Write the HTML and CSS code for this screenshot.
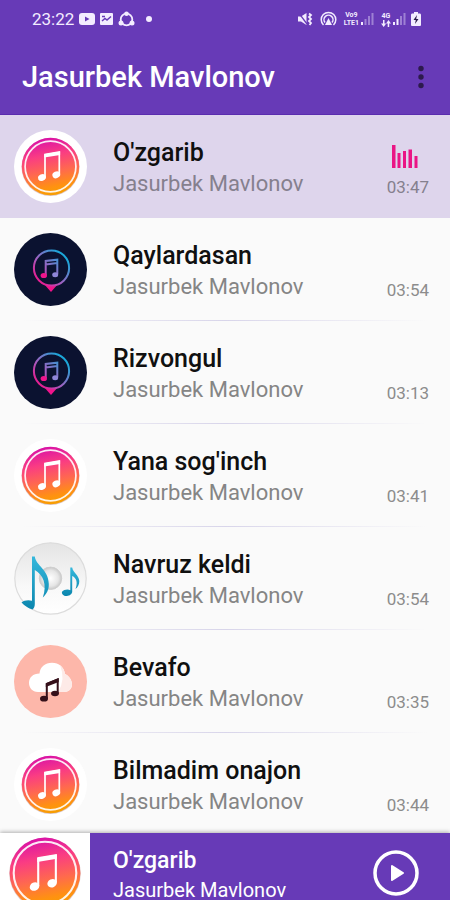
FILE: index.html
```html
<!DOCTYPE html>
<html lang="uz">
<head>
<meta charset="utf-8">
<meta name="viewport" content="width=device-width, initial-scale=1">
<title>Jasurbek Mavlonov</title>
<link rel="stylesheet" href="styles.css">
</head>
<body>
<svg class="defs" aria-hidden="true">
  <defs>
    <linearGradient id="sunset" x1="0.4" y1="0" x2="0.6" y2="1">
      <stop offset="0" stop-color="#d911a8"/>
      <stop offset="0.3" stop-color="#fa3c83"/>
      <stop offset="0.6" stop-color="#ff6a4d"/>
      <stop offset="0.85" stop-color="#ff9210"/>
      <stop offset="1" stop-color="#f5a000"/>
    </linearGradient>
    <linearGradient id="neon" gradientUnits="userSpaceOnUse" x1="24" y1="50" x2="50" y2="24">
      <stop offset="0" stop-color="#f0148c"/>
      <stop offset="0.45" stop-color="#a060c0"/>
      <stop offset="1" stop-color="#1ba6d8"/>
    </linearGradient>
    <linearGradient id="disc" x1="0" y1="0" x2="0" y2="1">
      <stop offset="0" stop-color="#e4e4e4"/>
      <stop offset="0.6" stop-color="#f8f8f8"/>
      <stop offset="1" stop-color="#ffffff"/>
    </linearGradient>
    <radialGradient id="hub">
      <stop offset="0" stop-color="#ffffff"/>
      <stop offset="0.7" stop-color="#e6e6e6"/>
      <stop offset="1" stop-color="#c8c8c8"/>
    </radialGradient>
    <linearGradient id="aqua" x1="0" y1="0" x2="0" y2="1">
      <stop offset="0" stop-color="#35b8dc"/>
      <stop offset="1" stop-color="#0b86ae"/>
    </linearGradient>
  </defs>
  <symbol id="art-sunset" viewBox="0 0 73 73">
    <circle cx="36.500" cy="36.500" r="36.500" fill="#fff"/>
    <circle cx="36.500" cy="37" r="29" fill="#b98a8a" opacity=".5"/>
    <circle cx="36.500" cy="36.500" r="28.700" fill="url(#sunset)"/>
    <circle cx="36.500" cy="36.500" r="25.400" fill="none" stroke="#fff" stroke-width="1.700" opacity=".9"/>
    <path d="M31 47V25L45.300 22.500V44" fill="none" stroke="#fff" stroke-width="1.700"/>
    <path d="M30.200 23.800L46.100 21V25L30.200 27.600Z" fill="#fff"/>
    <ellipse cx="28" cy="47.500" rx="4" ry="3.300" transform="rotate(-25 28 47.500)" fill="#fff"/>
    <ellipse cx="42.300" cy="44.800" rx="4" ry="3.300" transform="rotate(-25 42.300 44.800)" fill="#fff"/>
  </symbol>
  <symbol id="art-pin" viewBox="0 0 73 73">
    <circle cx="36.500" cy="36.500" r="36.500" fill="#0b1230"/>
    <path d="M30 51L37 59L44 51Q37 54 30 51Z" fill="#f0148c"/>
    <circle cx="37.500" cy="35" r="17.600" fill="none" stroke="url(#neon)" stroke-width="2"/>
    <path d="M31.700 42V28L43.300 26.700V41M31.700 31.500L43.300 30" fill="none" stroke="url(#neon)" stroke-width="2"/>
    <ellipse cx="29.800" cy="42.500" rx="3.200" ry="2.600" fill="#f0148c"/>
    <ellipse cx="41.200" cy="41.700" rx="3" ry="2.500" fill="#8f86d8"/>
  </symbol>
  <symbol id="art-disc" viewBox="0 0 73 73">
    <circle cx="36.500" cy="36.500" r="35.700" fill="url(#disc)" stroke="#dcdcdc" stroke-width="1.200"/>
    <circle cx="36.500" cy="36.300" r="11.200" fill="url(#hub)" stroke="#cfcfcf"/>
    <path d="M18 14.500H20.800C22 24 34.500 27 34.800 42C35 48 32.500 52 28.800 55.500C33.500 42 29 33 20.800 28V62C20.800 64.500 20 66.500 18.500 67.500C15 66.500 10 63.500 7.500 60.500C10 58.500 14 57.500 18 58.800Z" fill="url(#aqua)"/>
    <path d="M56.300 25.500H58.200C59 31 65 33 65.300 39C65.300 42.500 64 45 61.500 47C64 40.500 62.500 36 58.200 34V50C57.500 53 54.500 54 52 54C49 53.800 47.500 51.500 48 49.700C50 47.500 54 47 56.300 48.200Z" fill="url(#aqua)"/>
  </symbol>
  <symbol id="art-cloud" viewBox="0 0 73 73">
    <circle cx="36.500" cy="36.500" r="36.500" fill="#fdb7aa"/>
    <path d="M24 47C18 47 15 42.500 15 38C15 32.500 19 28.500 25.500 28.500C26 22 31 17.700 38 17.700C45 17.700 50 22 51 29C55 31 58 35 58 39.500C58 44 54.500 47 50 47Z" fill="#fff"/>
    <path d="M46 20Q50 23 51 29C55 31 58 35 58 39.500C58 44 54.500 47 50 47H44Q52 35 46 20Z" fill="#fdeae7"/>
    <path d="M32.800 53.500V39L43.700 34.500V48.500" fill="none" stroke="#35101a" stroke-width="2"/>
    <path d="M31.800 38.300L44.700 33V37L31.800 42Z" fill="#35101a"/>
    <ellipse cx="30" cy="53.700" rx="4" ry="2.900" fill="#35101a"/>
    <ellipse cx="41" cy="48.500" rx="3.900" ry="2.800" fill="#35101a"/>
  </symbol>
</svg>

<header class="header">
  <div class="status">
    <div class="status-group">
      <span class="clock">23:22</span>
      <svg width="16" height="14" viewBox="0 0 16 14" aria-hidden="true"><rect y="1" width="16" height="12" rx="3" fill="#f3ecff"/><path d="M6 4.500L10.500 7L6 9.500Z" fill="#673ab7"/></svg>
      <svg width="13" height="14" viewBox="0 0 13 14" aria-hidden="true"><rect y="1" width="13" height="12" rx="1" fill="#f3ecff"/><path d="M2 9L5 6.500L7 8L11 4.500M2 4.500H5" fill="none" stroke="#673ab7" stroke-width="1.500"/></svg>
      <svg width="17" height="16" viewBox="0 0 17 16" aria-hidden="true"><circle cx="8.500" cy="8.500" r="5.800" fill="none" stroke="#f3ecff" stroke-width="1.800"/><circle cx="8.500" cy="2.700" r="2.300" fill="#f3ecff"/><circle cx="3" cy="12" r="2.500" fill="#f3ecff"/><circle cx="14" cy="12" r="2.500" fill="#f3ecff"/></svg>
      <span class="notice-dot"></span>
    </div>
    <div class="status-group status-right">
      <svg width="15" height="14" viewBox="0 0 15 14" aria-hidden="true"><path d="M0 4.500H3L8.500 1V13L3 9.500H0Z" fill="#f3ecff"/><path d="M0 0L9 12" stroke="#673ab7" stroke-width="1.300"/><path d="M11 1.500L13 3L11 5L13 7L11 9L13 11L11.500 13" fill="none" stroke="#f3ecff" stroke-width="1.800"/></svg>
      <svg class="hotspot" width="17" height="16" viewBox="0 0 17 16" aria-hidden="true"><g fill="none" stroke="#f3ecff" stroke-width="1.500"><path d="M3.500 14A7.300 7.300 0 1 1 13.500 14"/><path d="M5 11.500A4.500 4.500 0 1 1 12 11.500"/></g><path d="M8.500 7L12 14H5Z" fill="#f3ecff"/></svg>
      <span class="network"><span>Vo9</span><span>LTE1</span></span>
      <svg class="signal" width="13" height="14" viewBox="0 0 13 14" aria-hidden="true"><g fill="#f3ecff"><path d="M0 10H2V13H0Z"/><path d="M3.500 7H5.500V13H3.500ZM7 4H9V13H7ZM10.500 1H12.500V13H10.500Z" opacity=".4"/></g></svg>
      <span class="network"><span>4G</span><svg width="10" height="7" viewBox="0 0 10 7" aria-hidden="true"><path d="M2 0H3.500V3.500H5.200L2.700 7L0 3.500H2ZM6.700 7H8.200V3.500H10L7.500 0L5 3.500H6.700Z" fill="#f3ecff"/></svg></span>
      <svg class="signal" width="13" height="14" viewBox="0 0 13 14" aria-hidden="true"><g fill="#f3ecff"><path d="M0 10H2V13H0ZM3.500 7H5.500V13H3.500Z"/><path d="M7 4H9V13H7ZM10.500 1H12.500V13H10.500Z" opacity=".4"/></g></svg>
      <svg width="10" height="14" viewBox="0 0 10 14" aria-hidden="true"><path d="M3 0H7V1.500H9Q10 1.500 10 3V13Q10 14 9 14H1Q0 14 0 13V3Q0 1.500 1 1.500H3Z" fill="#f3ecff"/><path d="M6 3L2.500 8H4.800L4 12L7.500 7H5.200Z" fill="#2b1a4a"/></svg>
    </div>
  </div>
  <div class="appbar">
    <h1 class="appbar-title">Jasurbek Mavlonov</h1>
    <button class="menu" type="button" aria-label="Menyu">
      <svg width="6" height="24" viewBox="0 0 6 24" aria-hidden="true"><g fill="#2c1a4d"><circle cx="3" cy="3.500" r="2.700"/><circle cx="3" cy="12" r="2.700"/><circle cx="3" cy="20.500" r="2.700"/></g></svg>
    </button>
  </div>
</header>

<main class="list-wrap">
  <ul class="list">
    <li class="track track-active">
      <svg class="art" aria-hidden="true"><use href="#art-sunset"/></svg>
      <div class="info"><h2 class="name">O'zgarib</h2><p class="artist">Jasurbek Mavlonov</p></div>
      <div class="side">
        <svg class="bars" width="26" height="23" viewBox="0 0 26 23" aria-hidden="true"><path d="M0 0H3.500V23H0ZM5.500 8H8.500V23H5.500ZM11 6H14V23H11ZM16.500 4.500H20V23H16.500ZM22.500 11H25.500V23H22.500Z" fill="#ea1585"/></svg>
        <span class="time">03:47</span>
      </div>
    </li>
    <li class="track">
      <svg class="art" aria-hidden="true"><use href="#art-pin"/></svg>
      <div class="info"><h2 class="name">Qaylardasan</h2><p class="artist">Jasurbek Mavlonov</p></div>
      <div class="side"><span class="time">03:54</span></div>
    </li>
    <li class="track">
      <svg class="art" aria-hidden="true"><use href="#art-pin"/></svg>
      <div class="info"><h2 class="name">Rizvongul</h2><p class="artist">Jasurbek Mavlonov</p></div>
      <div class="side"><span class="time">03:13</span></div>
    </li>
    <li class="track">
      <svg class="art" aria-hidden="true"><use href="#art-sunset"/></svg>
      <div class="info"><h2 class="name">Yana sog'inch</h2><p class="artist">Jasurbek Mavlonov</p></div>
      <div class="side"><span class="time">03:41</span></div>
    </li>
    <li class="track">
      <svg class="art" aria-hidden="true"><use href="#art-disc"/></svg>
      <div class="info"><h2 class="name">Navruz keldi</h2><p class="artist">Jasurbek Mavlonov</p></div>
      <div class="side"><span class="time">03:54</span></div>
    </li>
    <li class="track">
      <svg class="art" aria-hidden="true"><use href="#art-cloud"/></svg>
      <div class="info"><h2 class="name">Bevafo</h2><p class="artist">Jasurbek Mavlonov</p></div>
      <div class="side"><span class="time">03:35</span></div>
    </li>
    <li class="track">
      <svg class="art" aria-hidden="true"><use href="#art-sunset"/></svg>
      <div class="info"><h2 class="name">Bilmadim onajon</h2><p class="artist">Jasurbek Mavlonov</p></div>
      <div class="side"><span class="time">03:44</span></div>
    </li>
  </ul>
</main>

<footer class="player">
  <div class="player-art"><svg class="player-icon" aria-hidden="true"><use href="#art-sunset"/></svg></div>
  <div class="player-info"><p class="player-name">O'zgarib</p><p class="player-artist">Jasurbek Mavlonov</p></div>
  <button class="play" type="button" aria-label="Ijro etish">
    <svg width="46" height="46" viewBox="0 0 46 46" aria-hidden="true"><circle cx="23" cy="23" r="21" fill="none" stroke="#fff" stroke-width="3.500"/><path d="M19 16L30 23L19 30Z" fill="#fff" stroke="#fff" stroke-width="2" stroke-linejoin="round"/></svg>
  </button>
</footer>
</body>
</html>
```
FILE: styles.css
```css
* {
  box-sizing: border-box;
  margin: 0;
  padding: 0;
}

body {
  display: flex;
  flex-direction: column;
  height: 100vh;
  overflow: hidden;
  background: #fafafa;
  color: #101010;
  font-family: Roboto, "Liberation Sans", sans-serif;
}

button {
  border: 0;
  background: none;
  display: flex;
  cursor: pointer;
}

.defs {
  position: absolute;
  width: 0;
  height: 0;
}

.header {
  flex: none;
  background: #673ab7;
  color: #fff;
  border-bottom: 1px solid #5a2cae;
}

.status {
  display: flex;
  justify-content: space-between;
  align-items: center;
  height: 38px;
  padding: 0 29px 0 32px;
  color: #f3ecff;
}

.status-group {
  display: flex;
  align-items: center;
  gap: 5px;
}

.clock {
  font-size: 17px;
  line-height: 20px;
}

.notice-dot {
  width: 6px;
  height: 6px;
  margin-left: 6px;
  border-radius: 50%;
  background: #f3ecff;
}

.hotspot {
  margin-left: 2px;
}

.network {
  display: flex;
  flex-direction: column;
  align-items: center;
  margin-left: 2px;
  font-size: 7px;
  line-height: 8px;
  font-weight: 700;
}

.signal {
  margin-left: -3px;
}

.appbar {
  display: flex;
  justify-content: space-between;
  align-items: center;
  height: 76px;
  padding: 2px 26px 0 22px;
}

.appbar-title {
  font-size: 29px;
  line-height: 36px;
  font-weight: 500;
}

.list-wrap {
  flex: 1;
  min-height: 0;
  overflow: hidden;
}

.list {
  list-style: none;
}

.track {
  display: flex;
  gap: 26px;
  height: 103px;
  padding: 15px 21px 0 14px;
  background: linear-gradient(90deg, transparent 5%, #d8d5ea 50%, transparent 95%) bottom / 100% 1px no-repeat;
}

.track-active {
  background: #ded5ec;
}

.art {
  flex: none;
  width: 73px;
  height: 73px;
}

.info {
  flex: 1;
  padding-top: 8px;
}

.name {
  font-size: 25px;
  line-height: 30px;
  font-weight: 500;
}

.artist {
  font-size: 22px;
  line-height: 32px;
  color: #858585;
}

.track-active .artist,
.track-active .time {
  color: #85808e;
}

.side {
  display: flex;
  flex-direction: column;
  justify-content: flex-end;
  gap: 9px;
  padding-bottom: 21px;
}

.bars {
  margin-left: 5px;
}

.time {
  font-size: 17px;
  line-height: 20px;
  color: #8c8c8c;
}

.player {
  flex: none;
  display: flex;
  height: 67px;
  overflow: hidden;
  background: #673ab7;
  color: #fff;
  box-shadow: 0 -1px 4px rgba(0, 0, 0, 0.3);
}

.player-art {
  flex: none;
  display: flex;
  justify-content: center;
  align-items: center;
  width: 90px;
  height: 80px;
  background: #fff;
}

.player-icon {
  flex: none;
  width: 90px;
  height: 90px;
}

.player-info {
  flex: 1;
  padding: 13px 0 0 23px;
}

.player-name {
  font-size: 23px;
  line-height: 30px;
  font-weight: 500;
}

.player-artist {
  font-size: 20px;
  line-height: 28px;
}

.play {
  align-items: center;
  height: 80px;
  margin-right: 31px;
}
```
